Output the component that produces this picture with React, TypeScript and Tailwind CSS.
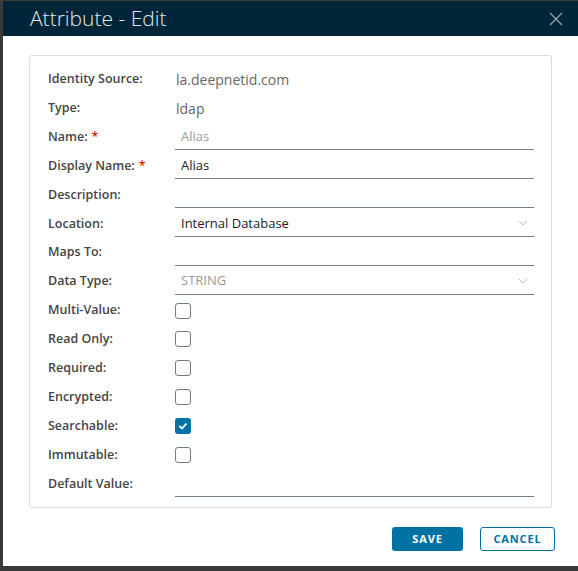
import React from 'react';

const font = { fontFamily: '"Open Sans", "Noto Sans", sans-serif' };

function Row({ label, required, children }: { label: string; required?: boolean; children?: React.ReactNode }) {
  return (
    <div className="flex h-[28.9px] items-center">
      <div className="w-[127px] shrink-0 text-[12.5px] font-semibold text-[#454545]">
        {label}
        {required && <span className="ml-[4px] text-[#e12200]">*</span>}
      </div>
      <div className="flex flex-1 items-center">{children}</div>
    </div>
  );
}

function Field({ value, muted, select }: { value?: string; muted?: boolean; select?: boolean }) {
  return (
    <div className="flex h-[26px] w-full items-center justify-between border-b border-[#737f87] pl-[6px] pr-[6px]">
      <span className={`text-[13px] ${muted ? 'text-[#9a9a9a]' : 'text-[#222]'}`}>{value}</span>
      {select && (
        <svg width="10" height="6" viewBox="0 0 10 6" fill="none">
          <path d="M1 1l4 4 4-4" stroke="#b8bec2" strokeWidth="1" />
        </svg>
      )}
    </div>
  );
}

function Check({ checked }: { checked?: boolean }) {
  return checked ? (
    <div className="flex h-[16px] w-[16px] items-center justify-center rounded-[3px] bg-[#0072a3]">
      <svg width="10" height="8" viewBox="0 0 10 8" fill="none">
        <path d="M1.5 4l2.5 2.5 4.5-5" stroke="#fff" strokeWidth="1.8" />
      </svg>
    </div>
  ) : (
    <div className="h-[16px] w-[16px] rounded-[3px] border border-[#6f7c84] bg-white" />
  );
}

export default function App() {
  return (
    <div className="h-[571px] w-[578px] bg-[#3a3a3a] pl-[3px] pt-[1px]" style={font}>
      <div className="flex h-[565px] flex-col bg-white">
        {/* header */}
        <div className="flex h-[35px] shrink-0 items-center justify-between bg-[#002538] pl-[27px] pr-[15px]">
          <span className="text-[21px] font-light text-[#e4e7ea]">Attribute - Edit</span>
          <svg width="14" height="14" viewBox="0 0 14 14" fill="none">
            <path d="M1 1l12 12M13 1L1 13" stroke="#8f9ca4" strokeWidth="1.4" />
          </svg>
        </div>

        {/* form card */}
        <div className="mx-[26px] mt-[19px] rounded-[3px] border border-[#dcdcdc] pb-[9px] pl-[18px] pr-[17px] pt-[9px]">
          <Row label="Identity Source:">
            <span className="pl-[1px] text-[14px] text-[#666]">la.deepnetid.com</span>
          </Row>
          <Row label="Type:">
            <span className="pl-[1px] text-[14px] text-[#666]">ldap</span>
          </Row>
          <Row label="Name:" required>
            <Field value="Alias" muted />
          </Row>
          <Row label="Display Name:" required>
            <Field value="Alias" />
          </Row>
          <Row label="Description:">
            <Field />
          </Row>
          <Row label="Location:">
            <Field value="Internal Database" select />
          </Row>
          <Row label="Maps To:">
            <Field />
          </Row>
          <Row label="Data Type:">
            <Field value="STRING" muted select />
          </Row>
          <Row label="Multi-Value:">
            <Check />
          </Row>
          <Row label="Read Only:">
            <Check />
          </Row>
          <Row label="Required:">
            <Check />
          </Row>
          <Row label="Encrypted:">
            <Check />
          </Row>
          <Row label="Searchable:">
            <Check checked />
          </Row>
          <Row label="Immutable:">
            <Check />
          </Row>
          <Row label="Default Value:">
            <Field />
          </Row>
        </div>

        {/* footer */}
        <div className="mt-[19px] flex justify-end gap-[17px] pr-[23px]">
          <button className="h-[24px] w-[71px] rounded-[3px] bg-[#0072a3] text-[11px] font-bold tracking-[0.08em] text-white">
            SAVE
          </button>
          <button className="h-[24px] w-[75px] rounded-[3px] border border-[#0072a3] bg-white text-[11px] font-bold tracking-[0.08em] text-[#0072a3]">
            CANCEL
          </button>
        </div>
      </div>
    </div>
  );
}
